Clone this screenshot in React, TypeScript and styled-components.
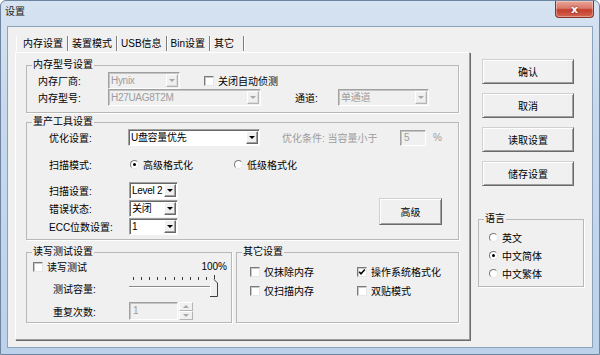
import React from "react";
import styled, { createGlobalStyle } from "styled-components";

const GlobalStyle = createGlobalStyle`
  * { box-sizing: border-box; }
  html, body { margin: 0; padding: 0; background: #ffffff; }
  body {
    font-family: "Liberation Sans", "Noto Sans CJK SC", sans-serif;
    font-size: 10px;
    color: #000;
  }
`;

const Window = styled.div`
  width: 600px;
  height: 355px;
  display: flex;
  flex-direction: column;
  background: linear-gradient(180deg, #d6e3f1 0%, #c8d9ed 30%, #bcd2ea 100%);
  border: 1px solid #6f84a0;
  border-radius: 6px 6px 0 0;
  overflow: hidden;
`;

const TitleBar = styled.div`
  height: 25px;
  flex-shrink: 0;
  display: flex;
  justify-content: space-between;
  align-items: flex-start;
  padding-left: 4px;
`;

const Caption = styled.span`
  line-height: 22px;
  color: #1b1b1b;
`;

const CloseButton = styled.div`
  width: 39px;
  height: 17px;
  margin-right: 5px;
  display: flex;
  align-items: center;
  justify-content: center;
  border: 1px solid #8a3428;
  border-top: none;
  border-radius: 0 0 4px 4px;
  background: linear-gradient(180deg, #e8a597 0%, #d9786a 45%, #c43e2d 55%, #d2654f 100%);
  box-shadow: inset 0 0 0 1px rgba(255, 255, 255, 0.35);
  color: #fff;
  font-family: "DejaVu Sans", sans-serif;
  font-weight: bold;
  font-size: 11px;
  text-shadow: 0 0 2px #5a1a10;
`;

const Client = styled.div`
  flex: 1;
  margin: 0 6px 6px;
  background: #f0f0f0;
  border: 1px solid #8da2bb;
  display: flex;
  align-items: flex-start;
  padding: 9px 0 0 7px;
`;

/* ---------- tabs ---------- */

const TabControl = styled.div`
  width: 455px;
  display: flex;
  flex-direction: column;
`;

const TabStrip = styled.div`
  height: 16px;
  display: flex;
  align-items: flex-start;
  padding-left: 1px;
`;

const Tab = styled.div<{ $active?: boolean; $last?: boolean }>`
  height: 15px;
  line-height: 15px;
  padding: 0 ${(p) => (p.$last ? 9 : 4)}px 0 ${(p) => (p.$active ? 6 : 4)}px;
  border-right: 1px solid #7d7d7d;
  box-shadow: 1px 0 0 #ffffff;
  border-left: ${(p) => (p.$active ? "1px solid #ffffff" : "none")};
  white-space: nowrap;
`;

const TabPanel = styled.div`
  height: 288px;
  display: flex;
  flex-direction: column;
  padding: 5px 10px 0 10px;
  border: 1px solid;
  border-color: #ffffff #a0a0a0 #a0a0a0 #ffffff;
  box-shadow: 1px 1px 0 #6a6a6a;
`;

/* ---------- group boxes ---------- */

const GroupBox = styled.fieldset<{ $w?: number; $mt?: number; $grow?: boolean }>`
  margin: ${(p) => p.$mt ?? 0}px 0 0 0;
  padding: 0;
  min-width: 0;
  border: 1px solid #b8b8b8;
  box-shadow: 1px 1px 0 #ffffff;
  ${(p) => (p.$w ? `width: ${p.$w}px;` : "")}
  ${(p) => (p.$grow ? "flex: 1;" : "")}
`;

const GroupTitle = styled.legend`
  margin-left: 5px;
  padding: 0 1px;
  line-height: 14px;
  font-size: 10px;
`;

const GroupBody = styled.div<{ $pl: number; $pr?: number; $pt?: number; $pb?: number }>`
  display: flex;
  flex-direction: column;
  padding: ${(p) => p.$pt ?? 0}px ${(p) => p.$pr ?? 0}px ${(p) => p.$pb ?? 0}px ${(p) => p.$pl}px;
`;

const GroupRow = styled.div<{ $gap?: number; $mt?: number }>`
  display: flex;
  gap: ${(p) => p.$gap ?? 0}px;
  margin-top: ${(p) => p.$mt ?? 0}px;
`;

const Row = styled.div<{ $h?: number; $mt?: number }>`
  height: ${(p) => p.$h ?? 17}px;
  margin-top: ${(p) => p.$mt ?? 0}px;
  display: flex;
  align-items: center;
`;

const FieldLabel = styled.span<{ $w?: number; $ml?: number; $dim?: boolean }>`
  ${(p) => (p.$w ? `width: ${p.$w}px;` : "")}
  margin-left: ${(p) => p.$ml ?? 0}px;
  flex-shrink: 0;
  white-space: nowrap;
  color: ${(p) => (p.$dim ? "#9d9d9d" : "#000")};
`;

/* ---------- controls ---------- */

const ComboBox = styled.div<{ $w: number; $disabled?: boolean }>`
  width: ${(p) => p.$w}px;
  height: 17px;
  flex-shrink: 0;
  display: flex;
  padding: 1px;
  border: 1px solid;
  border-color: #a0a0a0 #ffffff #ffffff #a0a0a0;
  box-shadow: inset 1px 1px 0 ${(p) => (p.$disabled ? "#c4c4c4" : "#696969")};
  background: ${(p) => (p.$disabled ? "#f0f0f0" : "#ffffff")};
`;

const ComboText = styled.span<{ $disabled?: boolean }>`
  flex: 1;
  line-height: 13px;
  padding-left: 1px;
  letter-spacing: -0.3px;
  overflow: hidden;
  white-space: nowrap;
  color: ${(p) => (p.$disabled ? "#9d9d9d" : "#000")};
`;

const ComboArrow = styled.span<{ $disabled?: boolean }>`
  width: 12px;
  display: flex;
  align-items: center;
  justify-content: center;
  background: #f0f0f0;
  border: 1px solid;
  border-color: ${(p) => (p.$disabled ? "#ffffff #b4b4b4 #b4b4b4 #ffffff" : "#ffffff #696969 #696969 #ffffff")};
  box-shadow: inset -1px -1px 0 ${(p) => (p.$disabled ? "#dcdcdc" : "#a0a0a0")};
`;

const Caret = styled.span<{ $disabled?: boolean; $up?: boolean }>`
  width: 0;
  height: 0;
  border-style: solid;
  border-width: ${(p) => (p.$up ? "0 3px 3px" : "3px 3px 0")};
  border-color: ${(p) =>
    p.$up
      ? `transparent transparent ${p.$disabled ? "#a8a8a8" : "#000"}`
      : `${p.$disabled ? "#a8a8a8" : "#000"} transparent transparent`};
`;

const Combo = ({ w, value, disabled }: { w: number; value: string; disabled?: boolean }) => (
  <ComboBox $w={w} $disabled={disabled}>
    <ComboText $disabled={disabled}>{value}</ComboText>
    <ComboArrow $disabled={disabled}>
      <Caret $disabled={disabled} />
    </ComboArrow>
  </ComboBox>
);

const TextBox = styled.span<{ $w: number; $h?: number }>`
  width: ${(p) => p.$w}px;
  height: ${(p) => p.$h ?? 17}px;
  flex-shrink: 0;
  padding-left: 3px;
  line-height: ${(p) => (p.$h ?? 17) - 2}px;
  color: #9d9d9d;
  background: #f0f0f0;
  border: 1px solid;
  border-color: #a0a0a0 #ffffff #ffffff #a0a0a0;
  box-shadow: inset 1px 1px 0 #c4c4c4;
`;

const SpinButtons = styled.span`
  width: 14px;
  height: 18px;
  margin-left: 1px;
  display: flex;
  flex-direction: column;
`;

const SpinHalf = styled.span`
  flex: 1;
  display: flex;
  align-items: center;
  justify-content: center;
  background: #f0f0f0;
  border: 1px solid;
  border-color: #ffffff #b4b4b4 #b4b4b4 #ffffff;
`;

const CheckItem = styled.span<{ $w?: number }>`
  ${(p) => (p.$w ? `width: ${p.$w}px;` : "")}
  display: flex;
  align-items: center;
  gap: 4px;
  flex-shrink: 0;
  white-space: nowrap;
`;

const CheckSquare = styled.span`
  width: 10px;
  height: 10px;
  flex-shrink: 0;
  display: flex;
  align-items: center;
  justify-content: center;
  background: #ffffff;
  border: 1px solid;
  border-color: #7a7a7a #e6e6e6 #e6e6e6 #7a7a7a;
  box-shadow: inset 1px 1px 0 #c8c8c8;
`;

const Check = ({ label, checked, w }: { label: string; checked?: boolean; w?: number }) => (
  <CheckItem $w={w}>
    <CheckSquare>
      {checked && (
        <svg width="8" height="8" viewBox="0 0 8 8">
          <path d="M1.2 3.8 L3 5.8 L6.8 1.6" fill="none" stroke="#000" strokeWidth="1.5" />
        </svg>
      )}
    </CheckSquare>
    <span>{label}</span>
  </CheckItem>
);

const RadioCircle = styled.span<{ $checked?: boolean }>`
  width: 9px;
  height: 9px;
  flex-shrink: 0;
  border-radius: 50%;
  display: flex;
  align-items: center;
  justify-content: center;
  background: #ffffff;
  border: 1px solid;
  border-color: #7a7a7a #e6e6e6 #e6e6e6 #7a7a7a;
  &::after {
    content: "";
    width: 3px;
    height: 3px;
    border-radius: 50%;
    background: ${(p) => (p.$checked ? "#000" : "transparent")};
  }
`;

const Radio = ({ label, checked, w }: { label: string; checked?: boolean; w?: number }) => (
  <CheckItem $w={w}>
    <RadioCircle $checked={checked} />
    <span>{label}</span>
  </CheckItem>
);

const PushButton = styled.button<{ $w: number; $h: number; $ml?: number; $mt?: number }>`
  width: ${(p) => p.$w}px;
  height: ${(p) => p.$h}px;
  margin: ${(p) => p.$mt ?? 0}px 0 0 ${(p) => p.$ml ?? 0}px;
  flex-shrink: 0;
  padding: 0;
  font: inherit;
  color: #000;
  background: #f0f0f0;
  border: 1px solid;
  border-color: #d0d0d0 #6a6a6a #6a6a6a #d0d0d0;
  box-shadow: inset 1px 1px 0 #ffffff, inset -1px -1px 0 #a0a0a0;
`;

const SliderBox = styled.div`
  display: flex;
  align-items: flex-start;
  height: 24px;
`;

const Slider = () => {
  const ticks = Array.from({ length: 11 }, (_, i) => 4 + i * 8.1);
  return (
    <svg width="92" height="24" viewBox="0 0 92 24">
      {ticks.map((x, i) => (
        <line
          key={i}
          x1={Math.round(x) + 0.5}
          x2={Math.round(x) + 0.5}
          y1={i === ticks.length - 1 ? 1 : 3}
          y2={6}
          stroke="#3a3a3a"
          strokeWidth="1"
        />
      ))}
      <line x1="0" x2="82" y1="12.5" y2="12.5" stroke="#8a8a8a" />
      <line x1="0" x2="82" y1="13.5" y2="13.5" stroke="#ffffff" />
      <polygon points="81,23 81,9 85,5 89,9 89,23" fill="#f0f0f0" />
      <polyline points="81.5,23 81.5,9 85,5.5" fill="none" stroke="#ffffff" />
      <polyline points="85,5.5 88.5,9 88.5,22.5 81,22.5" fill="none" stroke="#404040" />
    </svg>
  );
};

const RightColumn = styled.div`
  width: 106px;
  margin: 23px 0 0 8px;
  display: flex;
  flex-direction: column;
`;

export default function App() {
  return (
    <>
      <GlobalStyle />
      <Window>
        <TitleBar>
          <Caption>设置</Caption>
          <CloseButton>x</CloseButton>
        </TitleBar>
        <Client>
          <TabControl>
            <TabStrip>
              <Tab $active>内存设置</Tab>
              <Tab>装置模式</Tab>
              <Tab>USB信息</Tab>
              <Tab>Bin设置</Tab>
              <Tab $last>其它</Tab>
            </TabStrip>
            <TabPanel>
              <GroupBox>
                <GroupTitle>内存型号设置</GroupTitle>
                <GroupBody $pl={11} $pb={6}>
                  <Row>
                    <FieldLabel $w={70}>内存厂商:</FieldLabel>
                    <Combo w={72} value="Hynix" disabled />
                    <FieldLabel $ml={24}>
                      <Check label="关闭自动侦测" />
                    </FieldLabel>
                  </Row>
                  <Row>
                    <FieldLabel $w={70}>内存型号:</FieldLabel>
                    <Combo w={153} value="H27UAG8T2M" disabled />
                    <FieldLabel $w={43} $ml={34}>通道:</FieldLabel>
                    <Combo w={91} value="单通道" disabled />
                  </Row>
                </GroupBody>
              </GroupBox>

              <GroupBox $mt={2}>
                <GroupTitle>量产工具设置</GroupTitle>
                <GroupBody $pl={22} $pr={16} $pb={4}>
                  <Row>
                    <FieldLabel $w={79}>优化设置:</FieldLabel>
                    <Combo w={132} value="U盘容量优先" />
                    <FieldLabel $w={118} $ml={22} $dim>
                      优化条件: 当容量小于
                    </FieldLabel>
                    <TextBox $w={26} $h={16}>5</TextBox>
                    <FieldLabel $ml={7} $dim>%</FieldLabel>
                  </Row>
                  <Row $mt={10}>
                    <FieldLabel $w={81}>扫描模式:</FieldLabel>
                    <Radio label="高级格式化" checked w={104} />
                    <Radio label="低级格式化" />
                  </Row>
                  <GroupRow>
                    <GroupBody $pl={0}>
                      <Row $mt={9}>
                        <FieldLabel $w={80}>扫描设置:</FieldLabel>
                        <Combo w={49} value="Level 2" />
                      </Row>
                      <Row $mt={1}>
                        <FieldLabel $w={80}>错误状态:</FieldLabel>
                        <Combo w={49} value="关闭" />
                      </Row>
                      <Row $mt={1}>
                        <FieldLabel $w={80}>ECC位数设置:</FieldLabel>
                        <Combo w={49} value="1" />
                      </Row>
                    </GroupBody>
                    <PushButton $w={63} $h={27} $mt={25} style={{ marginLeft: "auto" }}>
                      高级
                    </PushButton>
                  </GroupRow>
                </GroupBody>
              </GroupBox>

              <GroupRow $gap={4} $mt={5}>
                <GroupBox $w={206}>
                  <GroupTitle>读写测试设置</GroupTitle>
                  <GroupBody $pl={6} $pr={4} $pb={2}>
                    <Row $h={15}>
                      <Check label="读写测试" />
                      <FieldLabel style={{ marginLeft: "auto" }}>100%</FieldLabel>
                    </Row>
                    <SliderBox>
                      <FieldLabel $w={76} $ml={20} style={{ marginTop: 9, lineHeight: "14px" }}>
                        测试容量:
                      </FieldLabel>
                      <Slider />
                    </SliderBox>
                    <Row $h={18} $mt={4}>
                      <FieldLabel $w={76} $ml={20}>重复次数:</FieldLabel>
                      <TextBox $w={49} $h={18}>1</TextBox>
                      <SpinButtons>
                        <SpinHalf>
                          <Caret $up $disabled />
                        </SpinHalf>
                        <SpinHalf>
                          <Caret $disabled />
                        </SpinHalf>
                      </SpinButtons>
                    </Row>
                  </GroupBody>
                </GroupBox>

                <GroupBox $grow>
                  <GroupTitle>其它设置</GroupTitle>
                  <GroupBody $pl={13}>
                    <Row $h={15} $mt={5}>
                      <Check label="仅抹除内存" w={107} />
                      <Check label="操作系统格式化" checked />
                    </Row>
                    <Row $h={15} $mt={4}>
                      <Check label="仅扫描内存" w={107} />
                      <Check label="双贴模式" />
                    </Row>
                  </GroupBody>
                </GroupBox>
              </GroupRow>
            </TabPanel>
          </TabControl>

          <RightColumn>
            <PushButton $w={92} $h={25} $ml={4}>确认</PushButton>
            <PushButton $w={92} $h={25} $ml={4} $mt={9}>取消</PushButton>
            <PushButton $w={92} $h={25} $ml={4} $mt={9}>读取设置</PushButton>
            <PushButton $w={92} $h={25} $ml={4} $mt={9}>储存设置</PushButton>
            <GroupBox $mt={26}>
              <GroupTitle>语言</GroupTitle>
              <GroupBody $pl={10} $pt={3} $pb={4}>
                <Row>
                  <Radio label="英文" />
                </Row>
                <Row $mt={1}>
                  <Radio label="中文简体" checked />
                </Row>
                <Row $mt={1}>
                  <Radio label="中文繁体" />
                </Row>
              </GroupBody>
            </GroupBox>
          </RightColumn>
        </Client>
      </Window>
    </>
  );
}
